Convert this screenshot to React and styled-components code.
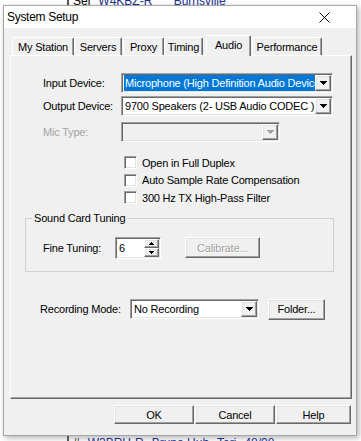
import React from "react";
import styled, { createGlobalStyle, css } from "styled-components";

const Global = createGlobalStyle`
  html, body { margin: 0; padding: 0; background: #fff; }
  body {
    font-family: "Liberation Sans", Arial, sans-serif;
    font-size: 11px;
    letter-spacing: -0.2px;
    color: #000;
  }
`;

const Desktop = styled.div`
  width: 361px;
  height: 441px;
  overflow: hidden;
  background: #fff;
  display: flex;
  flex-direction: column;
`;

const Behind = styled.div`
  flex: none;
  height: 5px;
  overflow: hidden;
  display: flex;
  align-items: ${(p) => (p.$top ? "flex-end" : "flex-start")};
  padding-left: 67px;
  font-size: 12px;
  line-height: 14px;
  letter-spacing: 0;
  white-space: nowrap;
`;

const BehindLine = styled.div`
  display: flex;
  gap: 8px;
  border-left: 2px solid #555;
  padding-left: 4px;
  margin-bottom: ${(p) => (p.$top ? "-3px" : "0")};
  span:nth-child(n + 2) {
    color: #1c2f8f;
  }
`;

const Window = styled.div`
  flex: none;
  margin-left: 3px;
  width: 352px;
  height: 429px;
  border: 1px solid #a6a6a6;
  background: #f0f0f0;
  box-shadow: 2px 2px 6px rgba(0, 0, 0, 0.3);
  display: flex;
  flex-direction: column;
`;

const TitleBar = styled.div`
  flex: none;
  height: 22px;
  background: #fff;
  display: flex;
  align-items: center;
  justify-content: space-between;
  padding: 0 26px 0 3px;
  font-size: 12px;
  letter-spacing: -0.3px;
`;

const TabStrip = styled.div`
  display: flex;
  align-items: flex-end;
  height: 20px;
  margin-top: 7px;
  padding-left: 8px;
`;

const Tab = styled.div`
  box-sizing: border-box;
  width: ${(p) => p.$w}px;
  height: 18px;
  margin-left: ${(p) => p.$ml || 0}px;
  border: 1px solid;
  border-bottom: none;
  border-color: #fff #696969 #696969 #fff;
  border-radius: 2px 2px 0 0;
  box-shadow: inset -1px 0 #a0a0a0;
  display: flex;
  align-items: center;
  justify-content: center;
  padding-top: 1px;
  white-space: nowrap;
  ${(p) =>
    p.$active &&
    css`
      position: relative;
      z-index: 1;
      height: 21px;
      margin-bottom: -1px;
      padding-top: 0;
      padding-bottom: 3px;
      background: #f0f0f0;
    `}
`;

const Panel = styled.div`
  box-sizing: border-box;
  margin-left: 6px;
  width: 342px;
  height: 344px;
  border: 1px solid;
  border-color: #fff #696969 #696969 #fff;
  box-shadow: inset -1px -1px #a0a0a0;
  padding-top: 17px;
  display: flex;
  flex-direction: column;
`;

const FieldRow = styled.div`
  display: flex;
  align-items: ${(p) => p.$align || "center"};
  margin-top: ${(p) => p.$mt || 0}px;
  margin-bottom: ${(p) => p.$mb || 0}px;
  margin-left: ${(p) => p.$ml || 32}px;
`;

const Label = styled.div`
  width: ${(p) => p.$w}px;
  flex: none;
  white-space: nowrap;
  color: ${(p) => (p.$disabled ? "#a3a3a3" : "#000")};
  line-height: ${(p) => (p.$lh ? `${p.$lh}px` : "normal")};
`;

const sunken = css`
  box-sizing: border-box;
  border: 1px solid;
  border-color: #a0a0a0 #fff #fff #a0a0a0;
  box-shadow: inset 1px 1px #696969, inset -1px -1px #e3e3e3;
`;

const raised = css`
  box-sizing: border-box;
  border: 1px solid;
  border-color: #fff #696969 #696969 #fff;
  box-shadow: inset -1px -1px #a0a0a0, inset 1px 1px #e3e3e3;
  background: #f0f0f0;
`;

const Combo = styled.div`
  ${sunken};
  flex: none;
  width: ${(p) => p.$w}px;
  height: 20px;
  padding: 1px;
  display: flex;
  background: ${(p) => (p.$disabled ? "#f0f0f0" : "#fff")};
`;

const ComboValue = styled.div`
  flex: 1;
  min-width: 0;
  overflow: hidden;
  white-space: nowrap;
  display: flex;
  align-items: center;
  padding-left: 2px;
  margin-left: ${(p) => (p.$selected ? 1 : 0)}px;
  ${(p) =>
    p.$selected &&
    css`
      background: #0078d7;
      color: #fff;
      padding-left: 1px;
    `}
`;

const DropButton = styled.div`
  ${raised};
  flex: none;
  width: 16px;
  height: 16px;
  display: flex;
  align-items: center;
  justify-content: center;
`;

const Arrow = ({ up, color = "#000", w = 7, h = 4 }) => (
  <svg width={w} height={h} viewBox={`0 0 ${w} ${h}`} shapeRendering="crispEdges">
    <polygon
      points={up ? `${w / 2},0 ${w},${h} 0,${h}` : `0,0 ${w},0 ${w / 2},${h}`}
      fill={color}
    />
  </svg>
);

const CheckList = styled.div`
  display: flex;
  flex-direction: column;
  margin: 12px 0 0 113px;
`;

const CheckRow = styled.label`
  display: flex;
  align-items: center;
  gap: 5px;
  height: 17.5px;
  white-space: nowrap;
`;

const CheckBox = styled.span`
  ${sunken};
  width: 13px;
  height: 13px;
  background: #fff;
  flex: none;
`;

const Group = styled.fieldset`
  box-sizing: border-box;
  width: 309px;
  margin: 5px 0 0 14px;
  padding: 0;
  border: 1px solid #cfcfcf;
  min-inline-size: 0;
`;

const Legend = styled.legend`
  margin-left: 6px;
  padding: 0 2px;
  line-height: 13px;
`;

const Spin = styled.div`
  ${sunken};
  flex: none;
  width: 46px;
  height: 22px;
  padding: 1px;
  display: flex;
  background: #fff;
`;

const SpinValue = styled.div`
  flex: 1;
  display: flex;
  align-items: center;
  padding-left: 2px;
`;

const SpinButtons = styled.div`
  display: flex;
  flex-direction: column;
  width: 15px;
`;

const SpinHalf = styled.div`
  ${raised};
  flex: 1;
  display: flex;
  align-items: center;
  justify-content: center;
`;

const Button = styled.button`
  ${raised};
  flex: none;
  width: ${(p) => p.$w}px;
  height: ${(p) => p.$h || 19}px;
  margin: 0 0 0 ${(p) => p.$ml || 0}px;
  padding: 0;
  font-family: "Liberation Sans", Arial, sans-serif;
  font-size: 11px;
  letter-spacing: -0.2px;
  color: #000;
  &:disabled {
    color: #a0a0a0;
    text-shadow: 1px 1px #fff;
  }
`;

const ButtonBar = styled.div`
  display: flex;
  justify-content: flex-end;
  gap: 1px;
  margin-top: 6px;
  padding-right: 5px;
`;

const CloseIcon = () => (
  <svg width="11" height="11" viewBox="0 0 11 11">
    <path d="M0.5 0.5 L10.5 10.5 M10.5 0.5 L0.5 10.5" stroke="#000" strokeWidth="1" />
  </svg>
);

const tabs = [
  { name: "My Station", w: 62 },
  { name: "Servers", w: 48 },
  { name: "Proxy", w: 41, ml: 1 },
  { name: "Timing", w: 39 },
  { name: "Audio", w: 45, ml: 3, active: true },
  { name: "Performance", w: 70, ml: 1 },
];

const checks = [
  "Open in Full Duplex",
  "Auto Sample Rate Compensation",
  "300 Hz TX High-Pass Filter",
];

export default function App() {
  return (
    <>
      <Global />
      <Desktop>
        <Behind $top>
          <BehindLine $top>
            <span>Sel</span>
            <span>W4KBZ-R</span>
            <span>&nbsp;&nbsp;&nbsp;&nbsp;Burnsville</span>
          </BehindLine>
        </Behind>

        <Window>
          <TitleBar>
            <span>System Setup</span>
            <CloseIcon />
          </TitleBar>

          <TabStrip>
            {tabs.map((t) => (
              <Tab key={t.name} $w={t.w} $ml={t.ml} $active={t.active}>
                {t.name}
              </Tab>
            ))}
          </TabStrip>

          <Panel>
            <FieldRow>
              <Label $w={78}>Input Device:</Label>
              <Combo $w={212}>
                <ComboValue $selected>Microphone (High Definition Audio Device)</ComboValue>
                <DropButton>
                  <Arrow />
                </DropButton>
              </Combo>
            </FieldRow>
            <FieldRow $mt={3}>
              <Label $w={78}>Output Device:</Label>
              <Combo $w={212}>
                <ComboValue>9700 Speakers (2- USB Audio CODEC )</ComboValue>
                <DropButton>
                  <Arrow />
                </DropButton>
              </Combo>
            </FieldRow>
            <FieldRow $mt={6}>
              <Label $w={78} $disabled>
                Mic Type:
              </Label>
              <Combo $w={159} $disabled>
                <ComboValue />
                <DropButton>
                  <Arrow color="#a0a0a0" />
                </DropButton>
              </Combo>
            </FieldRow>

            <CheckList>
              {checks.map((c) => (
                <CheckRow key={c}>
                  <CheckBox />
                  {c}
                </CheckRow>
              ))}
            </CheckList>

            <Group>
              <Legend>Sound Card Tuning</Legend>
              <FieldRow $ml={17} $mt={12} $mb={12}>
                <Label $w={72}>Fine Tuning:</Label>
                <Spin>
                  <SpinValue>6</SpinValue>
                  <SpinButtons>
                    <SpinHalf>
                      <Arrow up w={5} h={3} />
                    </SpinHalf>
                    <SpinHalf>
                      <Arrow w={5} h={3} />
                    </SpinHalf>
                  </SpinButtons>
                </Spin>
                <Button $w={75} $h={21} $ml={24} disabled>
                  Calibrate...
                </Button>
              </FieldRow>
            </Group>

            <FieldRow $mt={27} $ml={29} $align="flex-start">
              <Label $w={90} $lh={20}>
                Recording Mode:
              </Label>
              <Combo $w={129}>
                <ComboValue>No Recording</ComboValue>
                <DropButton>
                  <Arrow />
                </DropButton>
              </Combo>
              <Button $w={57} $h={21} $ml={9}>
                Folder...
              </Button>
            </FieldRow>
          </Panel>

          <ButtonBar>
            <Button $w={80}>OK</Button>
            <Button $w={80}>Cancel</Button>
            <Button $w={75}>Help</Button>
          </ButtonBar>
        </Window>

        <Behind>
          <BehindLine>
            <span>#</span>
            <span>W2BRH-R</span>
            <span>Bruno Hub</span>
            <span>Teri</span>
            <span>48/98</span>
          </BehindLine>
        </Behind>
      </Desktop>
    </>
  );
}
